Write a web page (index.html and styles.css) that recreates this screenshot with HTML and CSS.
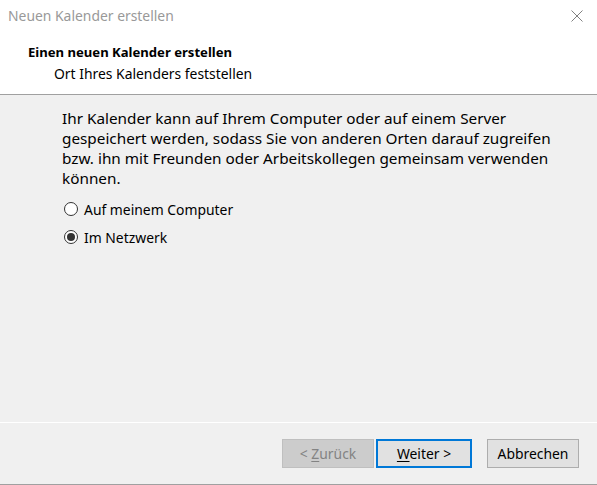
FILE: index.html
```html
<!DOCTYPE html>
<html lang="de">
<head>
<meta charset="utf-8">
<title>Neuen Kalender erstellen</title>
<link rel="stylesheet" href="styles.css">
</head>
<body>
<div class="window">
  <div class="top">
    <div class="titlebar">
      <span class="title">Neuen Kalender erstellen</span>
      <svg class="close" width="12" height="12" viewBox="0 0 12 12"><path d="M0.5 0.5 L11.5 11.5 M11.5 0.5 L0.5 11.5" stroke="#808080" stroke-width="1" fill="none"/></svg>
    </div>
    <div class="header">
      <div class="h-title">Einen neuen Kalender erstellen</div>
      <div class="h-sub">Ort Ihres Kalenders feststellen</div>
    </div>
  </div>
  <div class="content">
    <p class="desc">Ihr Kalender kann auf Ihrem Computer oder auf einem Server<br>gespeichert werden, sodass Sie von anderen Orten darauf zugreifen<br>bzw. ihn mit Freunden oder Arbeitskollegen gemeinsam verwenden<br>können.</p>
    <label class="radio"><span class="dot"></span>Auf meinem Computer</label>
    <label class="radio"><span class="dot checked"></span>Im Netzwerk</label>
  </div>
  <div class="footer">
    <button class="btn disabled">&lt; <u>Z</u>urück</button>
    <button class="btn default"><u>W</u>eiter &gt;</button>
    <button class="btn cancel">Abbrechen</button>
  </div>
</div>
</body>
</html>
```
FILE: styles.css
```css
html, body {
  margin: 0;
  padding: 0;
}
body {
  font-family: "Noto Sans", "Open Sans", sans-serif;
  font-size: 13.9px;
  color: #000;
  background: #f0f0f0;
}
.window {
  width: 597px;
  height: 485px;
  display: flex;
  flex-direction: column;
  background: #f0f0f0;
}
.top {
  background: #fff;
  border-bottom: 1px solid #a0a0a0;
  height: 94px;
}
.titlebar {
  height: 31px;
  display: flex;
  align-items: center;
  justify-content: space-between;
  padding: 0 14px 0 8px;
}
.title {
  color: #999;
  line-height: 20px;
}
.close {
  display: block;
}
.header {
  padding: 10px 0 0 28px;
  line-height: 22px;
}
.h-title {
  font-weight: bold;
  font-size: 13.1px;
}
.h-sub {
  padding-left: 26px;
}
.content {
  flex: 1;
  padding: 13px 0 0 62px;
}
.desc {
  margin: 0 0 7px 0;
  white-space: nowrap;
  line-height: 20px;
  font-size: 15.3px;
}
.radio {
  display: flex;
  align-items: center;
  height: 28px;
  margin-left: 2px;
}
.dot {
  width: 12px;
  height: 12px;
  border: 1px solid #333;
  border-radius: 50%;
  background: #fff;
  margin-right: 6px;
  position: relative;
  flex: none;
}
.dot.checked::after {
  content: "";
  position: absolute;
  left: 2px;
  top: 2px;
  width: 8px;
  height: 8px;
  border-radius: 50%;
  background: #333;
}
.footer {
  border-top: 1px solid #fff;
  border-bottom: 1px solid #a0a0a0;
  display: flex;
  align-items: center;
  padding: 0 0 1px 282px;
  box-sizing: border-box;
  height: 63px;
}
.btn {
  font-family: inherit;
  font-size: 13.9px;
  width: 92px;
  height: 29px;
  padding: 0;
  background: #e1e1e1;
  border: 1px solid #adadad;
  color: #000;
  margin-right: 2px;
  box-sizing: border-box;
}
.btn u {
  text-decoration-thickness: 1px;
  text-underline-offset: 2px;
}
.btn.disabled {
  background: #cccccc;
  border-color: #bfbfbf;
  color: #838383;
}
.btn.default {
  width: 96px;
  border: 2px solid #0078d7;
  margin-right: 15px;
}
```
